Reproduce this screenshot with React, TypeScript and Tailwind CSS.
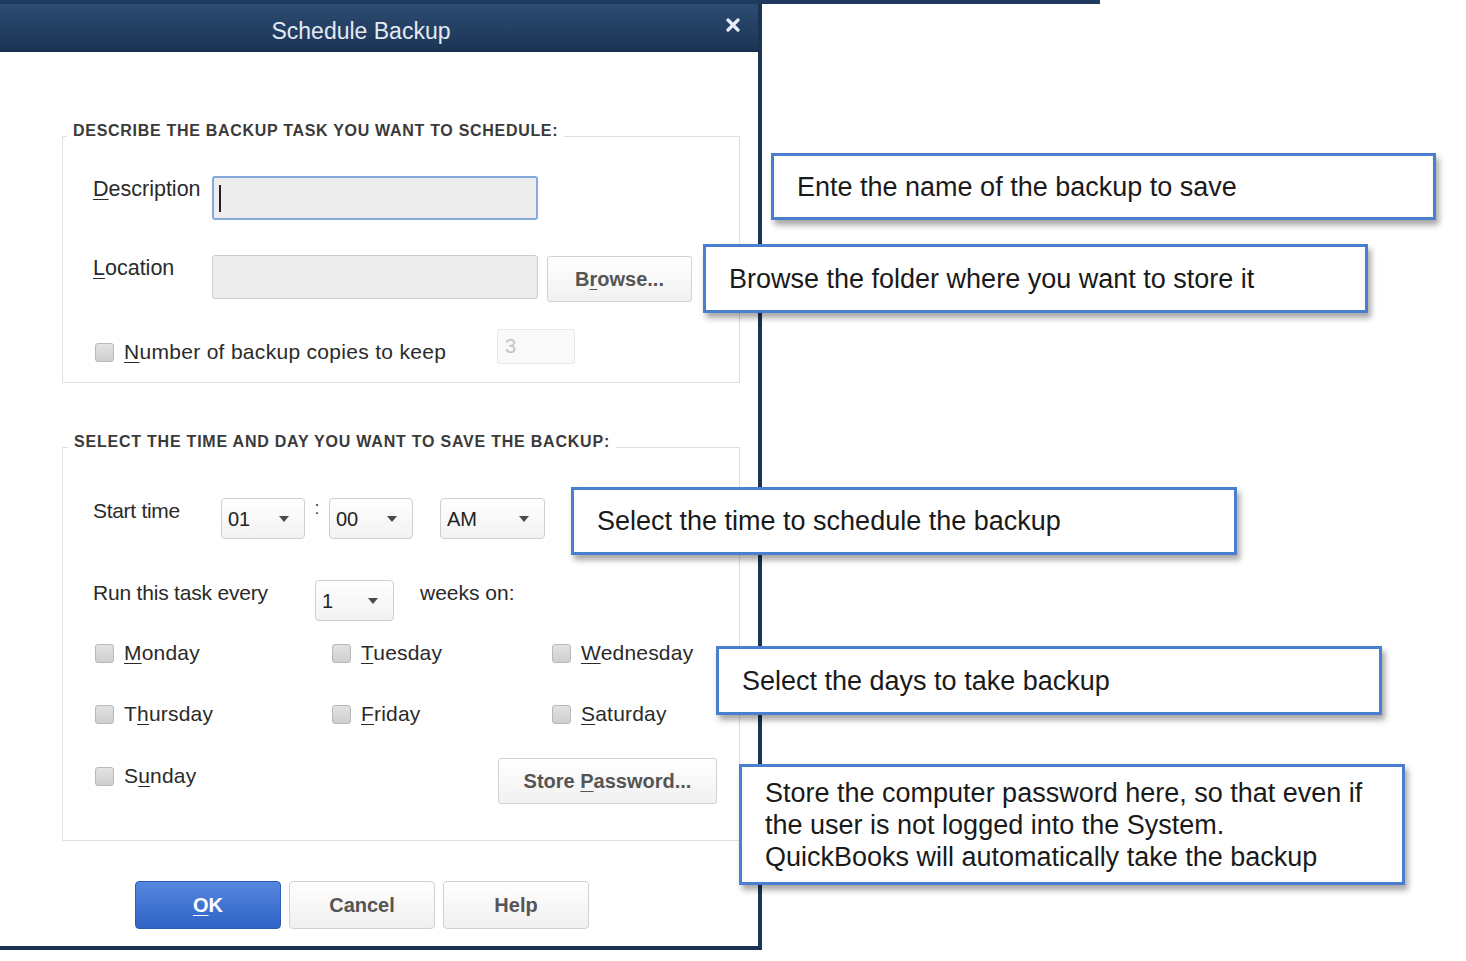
import React from "react";

function U({ children }: { children: React.ReactNode }) {
  return <span className="underline underline-offset-[3px] decoration-1">{children}</span>;
}

function Checkbox() {
  return (
    <div className="w-[19px] h-[19px] shrink-0 rounded-[3px] border border-[#b8b8b8] bg-gradient-to-b from-[#e2e2e2] to-[#cfcfcf]" />
  );
}

function Caret() {
  return (
    <svg width="10" height="6" viewBox="0 0 10 6" className="shrink-0">
      <path d="M0 0 L10 0 L5 6 Z" fill="#4a4a4a" />
    </svg>
  );
}

function Select({ value, w }: { value: string; w: string }) {
  return (
    <div
      className={`${w} h-[41px] shrink-0 flex items-center justify-between pl-[6px] pr-[15px] rounded-[4px] border border-[#cfcfcf] bg-gradient-to-b from-white to-[#f2f2f2] text-[20px] text-[#222]`}
    >
      <span>{value}</span>
      <Caret />
    </div>
  );
}

function Day({ children }: { children: React.ReactNode }) {
  return (
    <div className="flex items-center h-[24px]">
      <Checkbox />
      <span className="ml-[10px] text-[21px] leading-[24px] text-[#2a2a2a] tracking-[0.2px]">{children}</span>
    </div>
  );
}

function Callout({
  className,
  children,
}: {
  className: string;
  children: React.ReactNode;
}) {
  return (
    <div
      className={`absolute ${className} flex items-center pl-[23px] bg-white border-[3px] border-[#4a7fd0] shadow-[3px_5px_6px_rgba(0,0,0,0.35)] text-[27px] leading-[32px] text-[#1a1a1a]`}
    >
      <div>{children}</div>
    </div>
  );
}

export default function App() {
  return (
    <div className="relative w-[1466px] h-[961px] overflow-hidden bg-white font-['Liberation_Sans',Arial,sans-serif]">
      {/* background window edge */}
      <div className="w-[1100px] h-[4px] bg-[#1f3a5c]" />

      {/* dialog */}
      <div className="w-[762px] h-[946px] flex flex-col border-r-[4px] border-b-[4px] border-[#1b3352] bg-white">
        {/* title bar */}
        <div className="relative h-[48px] shrink-0 flex items-center justify-center pt-[8px] pr-[36px] bg-gradient-to-b from-[#2d4c72] to-[#1b3556] border-b-2 border-[#16304f]">
          <span className="text-[23px] text-[#e3eaf3]">Schedule Backup</span>
          <svg
            className="absolute right-[18px] top-[14px]"
            width="14"
            height="14"
            viewBox="0 0 14 14"
          >
            <path d="M2 2 L12 12 M12 2 L2 12" stroke="#e8eef5" strokeWidth="3.2" strokeLinecap="round" />
          </svg>
        </div>

        {/* content */}
        <div className="flex-1 flex flex-col">
          {/* group 1 */}
          <fieldset className="ml-[62px] mt-[70px] w-[678px] border border-[#dfdfdf] pb-[18px]">
            <legend className="ml-[4px] px-[6px] pb-[10px] text-[16px] leading-[18px] font-bold text-[#3a3a3a] tracking-[0.7px]">
              DESCRIBE THE BACKUP TASK YOU WANT TO SCHEDULE:
            </legend>

            <div className="pl-[30px]">
              <div className="mt-[26px] flex items-start">
                <span className="w-[119px] pt-[1px] text-[21.5px] leading-[24px] text-[#2a2a2a]">
                  <U>D</U>escription
                </span>
                <div className="w-[326px] h-[44px] rounded-[3px] border-2 border-[#86a9dc] bg-[#ededed] flex items-center pl-[5px]">
                  <div className="w-[1.5px] h-[27px] bg-[#222]" />
                </div>
              </div>

              <div className="mt-[35px] flex items-start">
                <span className="w-[119px] pt-[1px] text-[21.5px] leading-[24px] text-[#2a2a2a]">
                  <U>L</U>ocation
                </span>
                <div className="w-[326px] h-[44px] rounded-[3px] border border-[#cdcdcd] bg-[#ececec]" />
                <div className="ml-[9px] mt-[1px] w-[145px] h-[46px] rounded-[3px] border border-[#d2d2d2] bg-gradient-to-b from-white to-[#f1f1f1] flex items-center justify-center text-[20px] font-bold text-[#555]">
                  B<U>r</U>owse...
                </div>
              </div>

              <div className="mt-[27px] flex items-start">
                <div className="w-[404px] flex items-center ml-[2px] mt-[11px] h-[24px]">
                  <Checkbox />
                  <span className="ml-[10px] text-[21px] leading-[24px] text-[#2a2a2a] tracking-[0.3px]">
                    <U>N</U>umber of backup copies to keep
                  </span>
                </div>
                <div className="w-[78px] h-[35px] rounded-[3px] border border-[#e6e6e6] bg-[#f9f9f9] pl-[7px] text-[20px] leading-[32px] text-[#c4c4c4] -ml-[2px]">
                  3
                </div>
              </div>
            </div>
          </fieldset>

          {/* group 2 */}
          <fieldset className="ml-[62px] mt-[50px] w-[678px] border border-[#dfdfdf] pb-[36px]">
            <legend className="ml-[5px] px-[6px] pb-[10px] text-[16px] leading-[18px] font-bold text-[#3a3a3a] tracking-[0.78px]">
              SELECT THE TIME AND DAY YOU WANT TO SAVE THE BACKUP:
            </legend>

            <div className="pl-[30px]">
              <div className="mt-[37px] flex items-start">
                <span className="w-[128px] pt-[1px] text-[21px] leading-[24px] text-[#2a2a2a] tracking-[-0.3px]">
                  Start time
                </span>
                <Select value="01" w="w-[84px]" />
                <span className="w-[24px] text-center text-[18px] leading-[20px] text-[#444]">:</span>
                <Select value="00" w="w-[84px]" />
                <div className="w-[27px]" />
                <Select value="AM" w="w-[105px]" />
              </div>

              <div className="mt-[41px] flex items-start">
                <span className="w-[222px] pt-[1px] text-[21px] leading-[24px] text-[#2a2a2a] tracking-[-0.2px]">
                  Run this task every
                </span>
                <Select value="1" w="w-[79px]" />
                <span className="ml-[26px] pt-[1px] text-[21px] leading-[24px] text-[#2a2a2a]">weeks on:</span>
              </div>

              <div className="mt-[20px] ml-[2px] grid grid-cols-[237px_220px_1fr] gap-y-[37px]">
                <Day>
                  <U>M</U>onday
                </Day>
                <Day>
                  <U>T</U>uesday
                </Day>
                <Day>
                  <U>W</U>ednesday
                </Day>
                <Day>
                  T<U>h</U>ursday
                </Day>
                <Day>
                  <U>F</U>riday
                </Day>
                <Day>
                  <U>S</U>aturday
                </Day>
              </div>

              <div className="mt-[32px] ml-[2px] flex items-start">
                <div className="w-[403px] mt-[6px]">
                  <Day>
                    S<U>u</U>nday
                  </Day>
                </div>
                <div className="w-[219px] h-[46px] rounded-[3px] border border-[#d2d2d2] bg-gradient-to-b from-white to-[#f1f1f1] flex items-center justify-center text-[20px] font-bold text-[#555]">
                  Store&nbsp;<U>P</U>assword...
                </div>
              </div>
            </div>
          </fieldset>

          {/* buttons */}
          <div className="mt-[40px] ml-[135px] flex gap-[8px]">
            <div className="w-[146px] h-[48px] rounded-[4px] border border-[#2c5bb5] bg-gradient-to-b from-[#5587de] to-[#2f63c6] flex items-center justify-center text-[20px] font-bold text-white">
              <U>O</U>K
            </div>
            <div className="w-[146px] h-[48px] rounded-[4px] border border-[#d2d2d2] bg-gradient-to-b from-white to-[#f0f0f0] flex items-center justify-center text-[20px] font-bold text-[#555]">
              Cancel
            </div>
            <div className="w-[146px] h-[48px] rounded-[4px] border border-[#d2d2d2] bg-gradient-to-b from-white to-[#f0f0f0] flex items-center justify-center text-[20px] font-bold text-[#555]">
              Help
            </div>
          </div>
        </div>
      </div>

      {/* callouts */}
      <Callout className="left-[771px] top-[153px] w-[665px] h-[67px]">Ente the name of the backup to save</Callout>
      <Callout className="left-[703px] top-[244px] w-[665px] h-[69px]">Browse the folder where you want to store it</Callout>
      <Callout className="left-[571px] top-[487px] w-[666px] h-[68px]">Select the time to schedule the backup</Callout>
      <Callout className="left-[716px] top-[646px] w-[666px] h-[69px]">Select the days to take backup</Callout>
      <Callout className="left-[739px] top-[764px] w-[666px] h-[121px]">
        Store the computer password here, so that even if
        <br />
        the user is not logged into the System.
        <br />
        QuickBooks will automatically take the backup
      </Callout>
    </div>
  );
}
